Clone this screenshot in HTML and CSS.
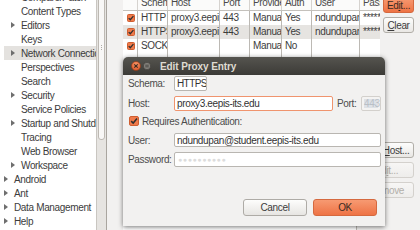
FILE: index.html
```html
<!DOCTYPE html>
<html>
<head>
<meta charset="utf-8">
<link rel="stylesheet" href="styles.css">
</head>
<body>
<div class="window">
  <aside class="tree-pane">
    <ul class="tree">
      <li class="l1"><span class="arrow leaf"></span>Compare/Patch</li>
      <li class="l1"><span class="arrow leaf"></span>Content Types</li>
      <li class="l1"><span class="arrow"></span>Editors</li>
      <li class="l1"><span class="arrow leaf"></span>Keys</li>
      <li class="l1 sel"><span class="arrow"></span>Network Connections</li>
      <li class="l1"><span class="arrow leaf"></span>Perspectives</li>
      <li class="l1"><span class="arrow leaf"></span>Search</li>
      <li class="l1"><span class="arrow"></span>Security</li>
      <li class="l1"><span class="arrow leaf"></span>Service Policies</li>
      <li class="l1"><span class="arrow"></span>Startup and Shutdown</li>
      <li class="l1"><span class="arrow leaf"></span>Tracing</li>
      <li class="l1"><span class="arrow leaf"></span>Web Browser</li>
      <li class="l1"><span class="arrow"></span>Workspace</li>
      <li class="l0"><span class="arrow"></span>Android</li>
      <li class="l0"><span class="arrow"></span>Ant</li>
      <li class="l0"><span class="arrow"></span>Data Management</li>
      <li class="l0"><span class="arrow"></span>Help</li>
    </ul>
  </aside>
  <div class="vscroll"><div class="thumb"><span class="grip"></span></div></div>
  <main class="content">
    <section class="entries">
      <div class="table">
        <div class="trow head">
          <div class="cell"></div>
          <div class="cell">Schema</div>
          <div class="cell">Host</div>
          <div class="cell">Port</div>
          <div class="cell">Provider</div>
          <div class="cell">Auth</div>
          <div class="cell">User</div>
          <div class="cell">Password</div>
        </div>
        <div class="trow">
          <div class="cell chk"><svg width="8" height="8" viewBox="0 0 8 8"><rect x=".5" y=".5" width="7" height="7" rx="1" fill="#f07a4a" stroke="#cf5e30"/><path d="M1.7 4.1 L3.3 5.7 L6.4 2.1" fill="none" stroke="#2f2f2f" stroke-width="1.3"/></svg></div>
          <div class="cell">HTTP</div>
          <div class="cell">proxy3.eepis-its.edu</div>
          <div class="cell">443</div>
          <div class="cell">Manual</div>
          <div class="cell">Yes</div>
          <div class="cell">ndundupan</div>
          <div class="cell">********</div>
        </div>
        <div class="trow alt">
          <div class="cell chk"><svg width="8" height="8" viewBox="0 0 8 8"><rect x=".5" y=".5" width="7" height="7" rx="1" fill="#f07a4a" stroke="#cf5e30"/><path d="M1.7 4.1 L3.3 5.7 L6.4 2.1" fill="none" stroke="#2f2f2f" stroke-width="1.3"/></svg></div>
          <div class="cell">HTTPS</div>
          <div class="cell">proxy3.eepis-its.edu</div>
          <div class="cell">443</div>
          <div class="cell">Manual</div>
          <div class="cell">Yes</div>
          <div class="cell">ndundupan</div>
          <div class="cell">********</div>
        </div>
        <div class="trow">
          <div class="cell chk"><svg width="8" height="8" viewBox="0 0 8 8"><rect x=".5" y=".5" width="7" height="7" rx="1" fill="#f07a4a" stroke="#cf5e30"/><path d="M1.7 4.1 L3.3 5.7 L6.4 2.1" fill="none" stroke="#2f2f2f" stroke-width="1.3"/></svg></div>
          <div class="cell">SOCKS</div>
          <div class="cell"></div>
          <div class="cell"></div>
          <div class="cell">Manual</div>
          <div class="cell">No</div>
          <div class="cell"></div>
          <div class="cell"></div>
        </div>
        <div class="trow filler">
          <div class="cell"></div><div class="cell"></div><div class="cell"></div><div class="cell"></div>
          <div class="cell"></div><div class="cell"></div><div class="cell"></div><div class="cell"></div>
        </div>
      </div>
      <div class="btn-col narrow">
        <button class="btn orange">Ed<u>i</u>t...</button>
        <button class="btn"><u>C</u>lear</button>
      </div>
    </section>
    <section class="bypass">
      <div class="table small"></div>
      <div class="btn-col wide">
        <button class="btn">Add <u>H</u>ost...</button>
        <button class="btn disabled">Ed<u>i</u>t...</button>
        <button class="btn disabled"><u>R</u>emove</button>
      </div>
    </section>
  </main>
</div>

<div class="dialog">
  <div class="titlebar">
    <svg class="wbtn" width="10" height="10" viewBox="0 0 10 10"><defs><radialGradient id="cg" cx="50%" cy="35%" r="60%"><stop offset="0" stop-color="#f89a6c"/><stop offset="1" stop-color="#d9572a"/></radialGradient></defs><circle cx="5" cy="5" r="4.6" fill="url(#cg)" stroke="#8a3a1a" stroke-width=".6"/><path d="M3.3 3.3 L6.7 6.7 M6.7 3.3 L3.3 6.7" stroke="#3b2a22" stroke-width="1.2"/></svg>
    <svg class="wbtn min" width="8" height="8" viewBox="0 0 8 8"><circle cx="4" cy="4" r="3.7" fill="#807e78" stroke="#2e2d2a" stroke-width=".5"/><rect x="2.3" y="2.6" width="3.4" height="2.8" fill="#5d5b56"/></svg>
    <span class="title">Edit Proxy Entry</span>
  </div>
  <div class="dbody">
    <div class="frow schema">
      <span class="lbl">Schema:</span>
      <span class="field combo">HTTPS</span>
    </div>
    <div class="frow host">
      <span class="lbl">Host:</span>
      <span class="field focus">proxy3.eepis-its.edu</span>
      <span class="plbl">Port:</span>
      <span class="field port"><span class="seltext">443</span></span>
    </div>
    <div class="frow auth">
      <svg class="dchk" width="10" height="10" viewBox="0 0 10 10"><rect x=".5" y=".5" width="9" height="9" rx="1.5" fill="#f07a4a" stroke="#cf5e30"/><path d="M2.2 5.1 L4.2 7.1 L8 2.6" fill="none" stroke="#2f2f2f" stroke-width="1.5"/></svg>
      <span class="albl">Requires Authentication:</span>
    </div>
    <div class="frow user">
      <span class="lbl">User:</span>
      <span class="field wide">ndundupan@student.eepis-its.edu</span>
    </div>
    <div class="frow pass">
      <span class="lbl">Password:</span>
      <span class="field wide"><span class="dots">●●●●●●●●●●</span></span>
    </div>
    <div class="actions">
      <button class="dbtn">Cancel</button>
      <button class="dbtn orange">OK</button>
    </div>
  </div>
</div>
</body>
</html>
```
FILE: styles.css
```css
* { box-sizing: border-box; }
html, body { margin: 0; padding: 0; }
body {
  width: 420px;
  height: 230px;
  overflow: hidden;
  position: relative;
  background: #f2f1f0;
  font-family: "Liberation Sans", Arial, sans-serif;
  font-size: 10px;
  letter-spacing: -0.35px;
  color: #3c3c3c;
}

.window { display: flex; height: 230px; overflow: hidden; }

/* tree */
.tree-pane { width: 96px; flex: none; background: #fff; overflow: hidden; }
.tree { list-style: none; margin: -10px 0 0; padding: 0; }
.tree li {
  height: 14px;
  display: flex;
  align-items: center;
  white-space: nowrap;
  overflow: hidden;
  color: #3c3c3c;
}
.tree li.l1 { padding-left: 11px; }
.tree li.l0 { padding-left: 4px; }
.tree li.sel { margin-left: 4px; padding-left: 7px; background: #e4e2df; }
.arrow {
  flex: none;
  width: 0; height: 0;
  border-left: 4px solid #6e6e6e;
  border-top: 3px solid transparent;
  border-bottom: 3px solid transparent;
  margin-right: 6px;
}
.arrow.leaf { visibility: hidden; }

/* scrollbar */
.vscroll {
  width: 11px; flex: none;
  background: #e6e4e1;
  border-left: 1px solid #c9c6c1;
  border-right: 1px solid #a9a59f;
  padding: 0 1px;
}
.thumb {
  height: 186px;
  margin-top: -46px;
  background: #f8f7f6;
  border: 1px solid #bdb9b3;
  border-radius: 3px;
  display: flex; align-items: center; justify-content: center;
}
.grip { width: 1px; height: 5px; border-left: 1px dotted #b0aca6; }

/* content */
.content { flex: 1; padding-left: 16px; display: flex; flex-direction: column; overflow: hidden; }
.entries { display: flex; height: 126px; margin-top: -4px; flex: none; }
.table {
  width: 257px; flex: none;
  background: #fff;
  overflow: hidden;
  display: flex; flex-direction: column;
}
.trow {
  display: grid;
  grid-template-columns: 15px 30px 52px 30px 32px 30px 48px 40px;
  height: 14px;
  flex: none;
}
.trow .cell {
  border-right: 1px solid #bcb9b4;
  white-space: nowrap;
  overflow: hidden;
  text-overflow: clip;
  padding-left: 3px;
  line-height: 14px;
  color: #3c3c3c;
}
.trow.head { height: 15px; background: #fbfbfa; border-bottom: 1px solid #c4c1bc; }
.trow.head .cell { border-right-color: #d6d3cf; line-height: 14px; color: #4a4a4a; }
.trow.alt { background: #e6e4e1; }
.trow .chk { padding-left: 4px; display: flex; align-items: center; }
.trow.filler { flex: 1; }

.btn-col { display: flex; flex-direction: column; gap: 4px; margin-left: 3px; }
.btn-col.narrow { width: 31px; margin-top: 1px; }
.btn {
  height: 16px;
  padding: 0;
  font: inherit;
  letter-spacing: inherit;
  color: #3c3c3c;
  border: 1px solid #b1aea8;
  border-radius: 3px;
  background: linear-gradient(#fdfdfc, #e9e7e4);
  white-space: nowrap;
  overflow: hidden;
}
.btn.orange, .dbtn.orange {
  background: linear-gradient(#f79a72, #ee7345);
  border-color: #d5693f;
  color: #3a2a22;
}
.btn.disabled { color: #b2afaa; background: linear-gradient(#f7f6f5, #eeedeb); border-color: #d4d1cd; }

.bypass { display: flex; margin-top: 20px; height: 88px; flex: none; }
.table.small { width: 234px; background: #fff; border-right: 1px solid #bcb9b4; }
.btn-col.wide { width: 55px; margin-left: 2px; }

/* dialog */
.dialog {
  position: absolute;
  left: 123px; top: 57px;
  width: 262px; height: 169px;
  background: #f2f1f0;
  border-radius: 5px 5px 0 0;
  box-shadow: 0 1px 5px rgba(0,0,0,0.55);
  display: flex; flex-direction: column;
}
.titlebar {
  height: 18px; flex: none;
  background: linear-gradient(#55544f, #3c3b37);
  border-radius: 5px 5px 0 0;
  display: flex; align-items: center;
  padding-left: 8px;
}
.wbtn { display: block; flex: none; }
.wbtn.min { margin-left: 2px; }
.title { margin-left: 9px; color: #dfdbd2; font-weight: bold; letter-spacing: -0.1px; }

.dbody { flex: 1; display: flex; flex-direction: column; padding: 1px 4px 10px 5px; }
.frow { display: flex; align-items: center; }
.lbl { width: 46px; flex: none; color: #4d4d4d; }
.field {
  display: flex; align-items: center;
  background: #fff;
  border: 1px solid #b9b6b1;
  border-radius: 2px;
  padding-left: 1px;
  color: #333;
  white-space: nowrap;
  overflow: hidden;
}
.schema { height: 14px; }
.schema .field { width: 33px; height: 15px; letter-spacing: -0.6px; padding-left: 2px; }
.host { margin-top: 6px; height: 15px; }
.host .field.focus { width: 159px; height: 15px; border-color: #f0946e; padding-left: 2px; }
.plbl { margin-left: 4px; width: 24px; color: #4d4d4d; }
.field.port { width: 20px; height: 15px; background: #f4f3f2; border-color: #d3d0cc; padding: 2px; }
.seltext { background: #dde1e6; color: #b9bfc6; height: 100%; display: flex; align-items: center; width: 100%; }
.auth { margin-top: 4px; height: 12px; }
.dchk { margin-left: 1px; display: block; flex: none; }
.albl { margin-left: 3px; color: #4d4d4d; }
.user { margin-top: 6px; height: 14px; }
.field.wide { width: 207px; height: 100%; padding-left: 2px; }
.pass { margin-top: 5px; height: 15px; }
.dots { color: #dcdcdc; font-size: 7px; letter-spacing: 0.6px; padding-left: 1px; }

.actions { margin-top: auto; display: flex; justify-content: flex-end; gap: 6px; padding-right: 4px; }
.dbtn {
  width: 64px; height: 17px;
  font: inherit; letter-spacing: inherit;
  color: #3c3c3c;
  border: 1px solid #aeaba6;
  border-radius: 3px;
  background: linear-gradient(#fdfdfc, #e7e5e2);
  padding: 0;
}
```
